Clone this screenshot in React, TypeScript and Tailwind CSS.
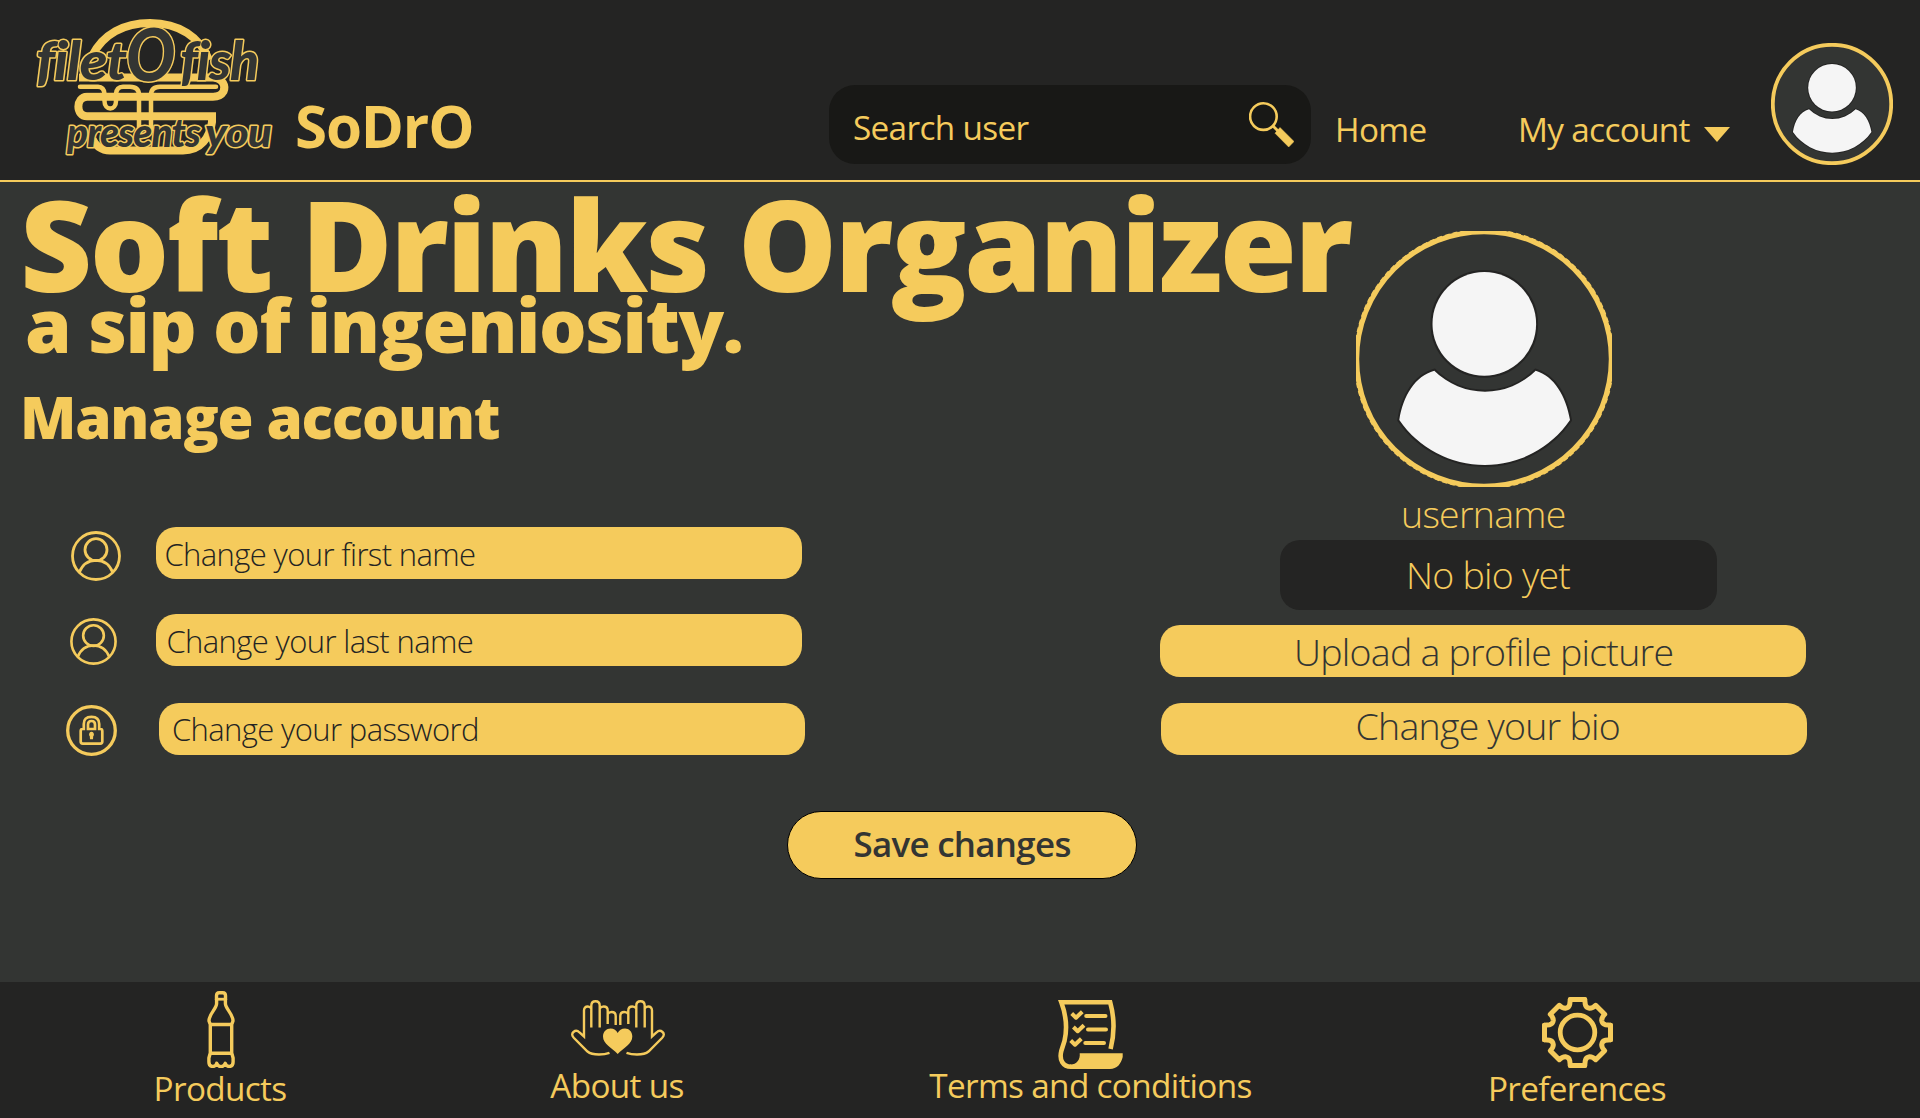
import type { ReactNode } from "react";

const YELLOW = "#f5cb5c";

function Logo() {
  return (
    <svg className="h-[160px] w-[280px] shrink-0" viewBox="0 0 280 160" fill="none" stroke={YELLOW}>
      <path d="M92 56C103 34 124 23 150 23C179 23 200 37 209 60" strokeWidth="8" />
      <path d="M79 77.500H214C223 79 226 86 223.500 91.500Q220.500 96.700 213 96.700H87C75.500 97 75.500 116.200 87 116.200H212V122C210 137 201 150.500 183 150.500H110C101 150.500 95 145 92.500 139" strokeWidth="8" />
      <path d="M80 86.800H98Q104 87 104.500 94V101C104.500 111 116 111 116 101V94Q116.500 87 123 86.800H130Q139 87 139 95V131M151 131V95Q151 87 160 86.800H216" strokeWidth="4.500" strokeLinecap="round" />
      <path d="M82 83H214M84 91.500H100M120 91.500H134M156 91.500H214" stroke="#242423" strokeWidth="1.600" />
      <g
        className="font-['Lato',sans-serif] font-black italic"
        fill="#333533"
        stroke={YELLOW}
        strokeWidth="3"
        strokeLinejoin="round"
        style={{ paintOrder: "stroke", fontVariantLigatures: "none" }}
      >
        <text x="36" y="80" fontSize="54" textLength="90" lengthAdjust="spacingAndGlyphs">filet</text>
        <text x="180" y="80" fontSize="54" textLength="78" lengthAdjust="spacingAndGlyphs">fish</text>
        <text x="126" y="81" fontSize="72" textLength="48" lengthAdjust="spacingAndGlyphs">O</text>
        <text x="67" y="147" fontSize="39" textLength="133" lengthAdjust="spacingAndGlyphs">presents</text>
        <text x="205" y="147" fontSize="39" textLength="66" lengthAdjust="spacingAndGlyphs">you</text>
      </g>
    </svg>
  );
}

function Person() {
  return (
    <g fill="#f5f5f5" stroke="#242423" strokeWidth="4" style={{ paintOrder: "stroke" }}>
      <circle cx="128.300" cy="92.900" r="51.800" />
      <path d="M78.300 139.700A71.700 71.700 0 0 0 179.700 139.700C198 145 210 165 214 189A103.400 103.400 0 0 1 43.300 189C47 165 59 145 78.300 139.700Z" />
    </g>
  );
}

function SmallAvatar() {
  return (
    <svg className="ml-[41px] mt-[43px] size-[122px] shrink-0" viewBox="0 0 122 122">
      <circle cx="61" cy="61" r="59.200" fill="#333533" stroke={YELLOW} strokeWidth="3.800" />
      <g transform="translate(2 2) scale(.46)">
        <Person />
      </g>
    </svg>
  );
}

function LargeAvatar() {
  return (
    <svg className="ml-[196px] mt-[49px] size-[256px] shrink-0" viewBox="0 0 256 256">
      <circle cx="128" cy="128" r="127.300" fill="#333533" stroke={YELLOW} strokeWidth="5" />
      <circle cx="128" cy="128" r="129" fill="none" stroke={YELLOW} strokeWidth="2.400" strokeDasharray="5 3" />
      <Person />
    </svg>
  );
}

function SearchIcon() {
  return (
    <svg className="ml-auto mr-[17px] mt-[17px] size-[45px]" viewBox="0 0 45 45" fill="none" stroke={YELLOW}>
      <circle cx="14.400" cy="14.600" r="13.300" strokeWidth="2.600" />
      <path d="M24 24L29 29" strokeWidth="2.800" />
      <path d="M31 25.500L45 39.500L39.700 45L26 31.200Z" fill={YELLOW} strokeWidth="0.500" />
    </svg>
  );
}

function UserIcon() {
  return (
    <svg className="size-full" viewBox="0 0 50 50" fill="none" stroke={YELLOW} strokeWidth="2.8">
      <circle cx="25" cy="25" r="23.500" />
      <circle cx="25" cy="18.700" r="11" />
      <path d="M8.200 41.500Q13 29.300 25 29.300Q37 29.300 41.800 41.500" />
    </svg>
  );
}

function LockIcon() {
  return (
    <svg className="size-full" viewBox="0 0 51 51" fill="none" stroke={YELLOW} strokeWidth="2.7">
      <circle cx="25.500" cy="25.500" r="23.800" strokeWidth="3.300" />
      <path d="M17.800 24V19Q17.800 11.800 25.500 11.800Q33.200 11.800 33.200 19V24H34.500Q36.300 24 36.300 26V36.500Q36.300 38.600 34.300 38.600H16.700Q14.700 38.600 14.700 36.500V26Q14.700 24 16.500 24Z" />
      <path d="M22 24V19.500Q22 16 25.500 16Q29 16 29 19.500V24Z" />
      <path d="M25.500 27.500A2 2 0 0 1 26.500 31L26.300 33.500H24.700L24.500 31A2 2 0 0 1 25.500 27.500Z" fill={YELLOW} strokeWidth="1.500" />
    </svg>
  );
}

function BottleIcon() {
  return (
    <svg className="h-[77px] w-[28px]" viewBox="0 0 28 77" fill="none" stroke={YELLOW} strokeWidth="3.4" strokeLinejoin="round">
      <path d="M9.500 9V4.700Q9.500 1.700 12.300 1.700H15.700Q18.500 1.700 18.500 4.700V9" />
      <path d="M9 8.200H19" strokeWidth="2.800" />
      <path d="M9.600 8V12.500C9.600 18 2 22.500 2 30L3.300 33.500V62L1.900 67V71C1.900 77 9 76.500 9.700 72.300C11 76.700 17 76.700 18.300 72.300C19 76.500 26.100 77 26.100 71V67L24.700 62V33.500L26 30C26 22.500 18.400 18 18.400 12.500V8" />
      <path d="M3 33.500H25M3 62.300H25" />
    </svg>
  );
}

function Hand() {
  return (
    <path d="M38.500 52.800Q34 54.500 28 54.500Q20 54.500 16.500 51.500L3 38Q-.300 34.500 2.500 32Q5.500 29.500 8.500 32.500L13 36.500V10.500Q13 6.500 16.800 6.500Q19 6.500 20.300 8.500M20.300 27.500V5.500Q20.500 1.200 24.500 1.200Q28.700 1.200 28.700 5.500V27.500M28.700 8.500Q30 6.500 32.700 6.500Q36.700 6.500 36.700 10.500V24M36.700 14Q38 12 40.700 12Q44.700 12 44.700 16V25" />
  );
}

function HandsIcon() {
  return (
    <svg className="h-[56px] w-[94px]" viewBox="0 0 94 56" fill="none" stroke={YELLOW} strokeWidth="2.4">
      <Hand />
      <g transform="translate(94 0) scale(-1 1)">
        <Hand />
      </g>
      <path d="M46.700 54C41 48 32 44 32 36.500C32 31.500 35.500 28.500 39.500 28.500C43 28.500 45.500 30.500 46.700 33C48 30.500 50.500 28.500 54 28.500C58 28.500 61.300 31.500 61.300 36.500C61.300 44 52.500 48 46.700 54Z" fill={YELLOW} stroke="none" />
    </svg>
  );
}

function ScrollIcon() {
  return (
    <svg className="h-[69px] w-[65px]" viewBox="0 0 65 69" fill="none" stroke={YELLOW} strokeWidth="4.6">
      <path d="M52.600 49C57.500 30 56 16 52.200 2.300H3.300C8 15 9.500 28 6.500 41L3.300 51C1 60 5 66.700 13 66.700" />
      <path d="M21.700 53.300H64.700V57C63 64 59 69 52 69H12V64.600C18 65 22.500 60 21.700 53.300Z" fill={YELLOW} stroke="none" />
      <g strokeWidth="4">
        <path d="M13.700 13.500L18 17.700L24.300 11.700M15.400 27L19.700 31.200L26 25.200M12.700 40.500L17 44.700L23.300 38.700" strokeLinejoin="round" />
        <path d="M28.200 16H47.500M30 29.500H48M27.300 43H46" strokeLinecap="round" />
      </g>
    </svg>
  );
}

const GEAR_QUARTER =
  "M28.300 2.500H42.700L43.300 7.500Q44 10.800 47.500 11.300Q50.500 11.500 53.700 8.300L62.700 17.300Q59.500 20.500 59.700 23.500Q60.200 27 63.500 27.700L68.500 28.300V42.700";

function GearIcon() {
  return (
    <svg className="size-[71px]" viewBox="0 0 71 71" fill="none" stroke={YELLOW} strokeWidth="5" strokeLinejoin="round" strokeLinecap="round">
      <circle cx="35.500" cy="35.500" r="17.300" strokeWidth="4.800" />
      <path d={GEAR_QUARTER} />
      <path d={GEAR_QUARTER} transform="rotate(90 35.500 35.500)" />
      <path d={GEAR_QUARTER} transform="rotate(180 35.500 35.500)" />
      <path d={GEAR_QUARTER} transform="rotate(270 35.500 35.500)" />
    </svg>
  );
}

function FormRow(props: { icon: ReactNode; label: string; row: string; iconBox: string; field: string }) {
  return (
    <div className={`flex items-start ${props.row}`}>
      <div className={`shrink-0 ${props.iconBox}`}>{props.icon}</div>
      <div className={`h-[52px] w-[646px] rounded-[20px] bg-[#f5cb5c] text-[31px] font-light leading-[40px] text-[#242423] ${props.field}`}>
        {props.label}
      </div>
    </div>
  );
}

function FooterItem(props: { icon: ReactNode; label: string; item: string; gap: string }) {
  return (
    <div className={`flex shrink-0 flex-col items-center ${props.item}`}>
      {props.icon}
      <span className={`text-[33.300px] leading-[40px] ${props.gap}`}>{props.label}</span>
    </div>
  );
}

export default function App() {
  return (
    <div className="flex h-[1118px] w-[1920px] flex-col overflow-hidden whitespace-nowrap bg-[#333533] font-['Open_Sans',sans-serif] text-[#f5cb5c] **:tracking-[-0.02em]">
      <header className="flex h-[182px] shrink-0 items-start border-b-2 border-[#f5cb5c] bg-[#242423]">
        <Logo />
        <div className="ml-[15px] mt-[96px] w-[534px] text-[58.300px] font-bold leading-[60px]">SoDrO</div>
        <div className="mt-[85px] flex h-[79px] w-[482px] shrink-0 items-start rounded-[26px] bg-[#181816] pl-[24px]">
          <span className="mt-[22px] text-[33.300px] leading-[40px]">Search user</span>
          <SearchIcon />
        </div>
        <nav className="flex items-start text-[33.300px] leading-[40px]">
          <a className="ml-[24px] mt-[109px] w-[183px]">Home</a>
          <a className="mt-[109px] w-[186px]">My account</a>
          <svg className="mt-[127px] h-[15px] w-[26px]" viewBox="0 0 26 15" fill={YELLOW}>
            <path d="M0 0H26L13 15Z" />
          </svg>
        </nav>
        <SmallAvatar />
      </header>

      <main className="flex h-[800px] shrink-0 flex-col">
        <div className="flex h-[629px] shrink-0">
          <section className="flex w-[1160px] shrink-0 flex-col">
            <h1 className="mt-[2px] pl-[20px] text-[125px] font-extrabold leading-[120px]">Soft Drinks Organizer</h1>
            <h2 className="-mt-[20px] pl-[25px] text-[75px] font-extrabold leading-[80px]">a sip of ingeniosity.</h2>
            <h3 className="mt-[23px] pl-[20px] text-[58.300px] font-extrabold leading-[60px]">Manage account</h3>
            <FormRow icon={<UserIcon />} label="Change your first name" row="mt-[80px]" iconBox="ml-[71px] mt-[4px] size-[50px]" field="ml-[35px] pl-[8.500px] pt-[7px]" />
            <FormRow icon={<UserIcon />} label="Change your last name" row="mt-[33px]" iconBox="ml-[70px] mt-[4px] size-[47px]" field="ml-[39px] pl-[10.500px] pt-[7px]" />
            <FormRow icon={<LockIcon />} label="Change your password" row="mt-[37px]" iconBox="ml-[66px] mt-[2px] size-[51px]" field="ml-[42px] pl-[13px] pt-[6px]" />
          </section>

          <section className="flex w-[760px] shrink-0 flex-col text-[37.500px] font-light leading-[40px]">
            <LargeAvatar />
            <div className="ml-[241px] mt-[7px]">username</div>
            <div className="ml-[120px] mt-[6px] h-[70px] w-[437px] rounded-[20px] bg-[#242423] pl-[126px] pt-[15px]">No bio yet</div>
            <div className="mt-[15px] h-[52px] w-[646px] rounded-[20px] bg-[#f5cb5c] pl-[134px] pt-[7px] text-[#333533]">Upload a profile picture</div>
            <div className="ml-px mt-[26px] h-[52px] w-[646px] rounded-[20px] bg-[#f5cb5c] pl-[194.500px] pt-[3px] text-[#333533]">Change your bio</div>
          </section>
        </div>
        <button className="ml-[787px] flex h-[68px] w-[350px] rounded-[34px] border border-black bg-[#f5cb5c] pl-[65.500px] pt-[12px] text-[34.900px] font-semibold leading-[40px] text-[#333533]">
          Save changes
        </button>
      </main>

      <footer className="flex h-[136px] shrink-0 items-start bg-[#242423]">
        <FooterItem icon={<BottleIcon />} label="Products" item="ml-[120px] w-[202px] pt-[9px]" gap="-ml-[2px]" />
        <FooterItem icon={<HandsIcon />} label="About us" item="ml-[196px] w-[200px] pt-[18px]" gap="-ml-[2px] mt-[9px]" />
        <FooterItem icon={<ScrollIcon />} label="Terms and conditions" item="ml-[172px] w-[401px] pt-[18px]" gap="-mt-[4px]" />
        <FooterItem icon={<GearIcon />} label="Preferences" item="ml-[186px] w-[200px] pt-[15px]" gap="" />
      </footer>
    </div>
  );
}
